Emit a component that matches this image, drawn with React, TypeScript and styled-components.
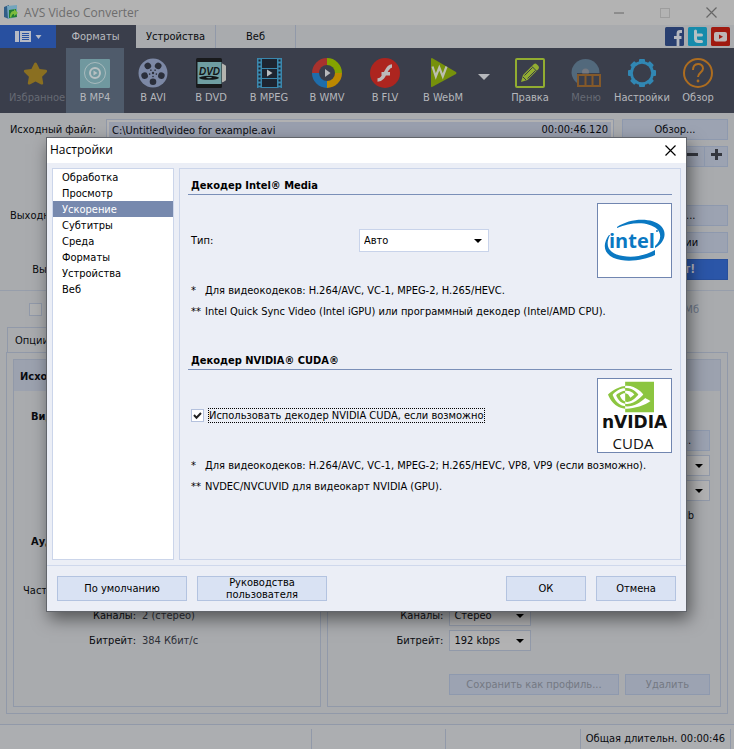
import React from "react";
import styled, { createGlobalStyle, css } from "styled-components";
import { SiNvidia } from "react-icons/si";
import { FaStar } from "react-icons/fa";

const ui = `"DejaVu Sans Condensed", "Noto Sans", sans-serif`;
const titleFont = `"Open Sans", "Noto Sans", sans-serif`;

const c = {
  page: "#a9abae",
  title: "#b3b3b3",
  bar: "#3a3e4b",
  line: "#9199a9",
  button: "#9ca3b2",
  field: "#b2b2b3",
  text: "#0a0b10",
};

const Global = createGlobalStyle`
  * { box-sizing: border-box; }
  html, body { margin: 0; padding: 0; }
  body { background: ${c.page}; font: 11px/15px ${ui}; color: ${c.text}; }
  button, input, select { font: inherit; color: inherit; margin: 0; }
  button { padding: 0; border: 0; background: none; white-space: nowrap; }
  h2, h3, p, ul { margin: 0; padding: 0; font: inherit; }
`;

/* ---------- main window ---------- */

const Window = styled.div`
  position: relative;
  display: flex;
  flex-direction: column;
  min-height: 100vh;
  overflow: hidden;
`;

const TitleBar = styled.header`
  display: flex;
  align-items: center;
  gap: 5px;
  height: 25px;
  padding-left: 4px;
  background: ${c.title};
  color: #6d6d6d;
  font: 12px/24px ${titleFont};
`;

const WindowButtons = styled.div`
  display: flex;
  margin-left: auto;
`;

const WindowButton = styled.button`
  display: grid;
  place-items: center;
  width: 46px;
  height: 24px;
`;

const TabBar = styled.nav`
  display: flex;
  height: 23px;
`;

const AppMenu = styled.button`
  display: grid;
  place-items: center;
  width: 56px;
  background: #2850a0;
`;

const MainTab = styled.button<{ $active?: boolean }>`
  width: 80px;
  border-right: 1px solid ${c.line};
  ${(p) =>
    p.$active &&
    css`
      background: ${c.bar};
      border-color: ${c.bar};
      color: #b8babf;
    `}
`;

const Social = styled.div`
  display: flex;
  align-items: center;
  gap: 4px;
  margin-left: auto;
  padding-right: 4px;

  a {
    display: block;
    height: 19px;
  }
`;

const Toolbar = styled.div`
  display: flex;
  justify-content: space-between;
  height: 65px;
  padding: 0 8px;
  background: ${c.bar};
`;

const ToolGroup = styled.div`
  display: flex;
`;

const Tool = styled.button<{ $active?: boolean; $disabled?: boolean; $narrow?: boolean }>`
  display: flex;
  flex-direction: column;
  align-items: center;
  gap: 2px;
  width: ${(p) => (p.$narrow ? 56 : 58)}px;
  padding-top: 10px;
  background: ${(p) => (p.$active ? "#4f5b6b" : "transparent")};
  color: ${(p) => (p.$disabled ? "#666a74" : "#b5b7bc")};
`;

const MoreButton = styled.button`
  display: grid;
  place-items: center;
  width: 24px;
  padding-bottom: 8px;
`;

const Files = styled.section`
  display: grid;
  grid-template-columns: 88px 1fr 106px;
  column-gap: 8px;
  padding: 6px 6px 4px 8px;
  border-bottom: 1px solid #979eab;
`;

const FileLabel = styled.label`
  text-align: right;
  line-height: 22px;
  white-space: nowrap;
  grid-column: 1;
`;

const FileField = styled.div`
  display: flex;
  height: 22px;
  margin-left: 2px;
  padding: 2px;
  border: 1px solid ${c.line};
  background: ${c.field};
`;

const FileInput = styled.input`
  flex: 1;
  min-width: 0;
  padding: 0 3px;
  border: 0;
  background: #999fae;
  outline: none;
`;

const FileTime = styled.span`
  padding-right: 3px;
  background: #999fae;
  line-height: 16px;
`;

const FlatButton = styled.button<{ $primary?: boolean; $w?: number; $dim?: boolean }>`
  width: ${(p) => (p.$w ? `${p.$w}px` : "auto")};
  height: 21px;
  border: 1px solid #8e99ae;
  background: ${c.button};
  color: ${(p) => (p.$dim ? "#747983" : "inherit")};
  ${(p) =>
    p.$primary &&
    css`
      border-color: #284f9b;
      background: #2b56a8;
      color: #b9bcc4;
      font-size: 12px;
      font-weight: 700;
    `}
`;

const SplitButtons = styled.div`
  grid-column: 3;
  display: flex;
  justify-content: flex-end;
  margin: 5px 0 38px;

  button + button {
    margin-left: -1px;
  }
`;

const ActionRow = styled.div`
  display: contents;

  > button {
    margin-bottom: 6px;
    grid-column: 3;
  }
`;

const SizeRow = styled.div`
  display: flex;
  align-items: center;
  justify-content: space-between;
  height: 36px;
  padding: 0 35px 0 29px;
  color: #6c7789;
`;

const Tick = styled.input<{ $dim?: boolean }>`
  appearance: none;
  flex: none;
  width: 13px;
  height: 13px;
  border: 1px solid ${(p) => (p.$dim ? c.line : "#b4c1dd")};
  background: ${(p) => (p.$dim ? "#b0b1b2" : "#fff")};
  outline: none;

  &:checked {
    background: #fff
      url("data:image/svg+xml,%3Csvg xmlns='http://www.w3.org/2000/svg' viewBox='0 0 11 11'%3E%3Cpath d='M2 5l2.5 2.8L9 3' fill='none' stroke='%23222' stroke-width='2'/%3E%3C/svg%3E");
  }
`;

const OptionsTab = styled.button`
  align-self: flex-start;
  width: 86px;
  height: 25px;
  margin-left: 7px;
  padding-left: 7px;
  border: 1px solid ${c.line};
  border-bottom: 0;
  text-align: left;
`;

const Options = styled.section`
  flex: 1;
  display: grid;
  grid-template-columns: 308fr 393fr;
  gap: 6px;
  margin: 0 6px 10px;
  padding: 6px;
  border: 1px solid ${c.line};
`;

const Group = styled.div`
  border: 1px solid ${c.line};
`;

const GroupTitle = styled.h2`
  height: 31px;
  padding-left: 6px;
  background: #9ca2af;
  font-weight: 700;
  line-height: 33px;
`;

const GroupRows = styled.div`
  padding: 12px 10px 0 9px;
`;

const GroupRow = styled.div<{ $label: number }>`
  display: grid;
  grid-template-columns: ${(p) => p.$label}px auto 1fr;
  align-items: center;
  column-gap: 6px;
  height: 25px;
  white-space: nowrap;

  > label,
  > span:first-child {
    justify-self: end;
  }
`;

const GroupHeading = styled.h3`
  height: 25px;
  padding-left: 8px;
  font-weight: 700;
  line-height: 27px;
`;

const Muted = styled.span`
  color: #2e3038;
`;

const RightEnd = styled.div`
  grid-column: 3;
  justify-self: end;
  min-width: 81px;
`;

const Amount = styled.span`
  grid-column: 3;
  justify-self: end;
  padding-right: 16px;
`;

const SelectBox = styled.span<{ $w: number; $light?: boolean }>`
  display: flex;
  align-items: center;
  width: ${(p) => p.$w}px;
  height: ${(p) => (p.$light ? 23 : 21)}px;
  border: 1px solid ${(p) => (p.$light ? "#c8d3ea" : c.line)};
  background: ${(p) => (p.$light ? "#fff" : c.field)};

  select {
    appearance: none;
    flex: 1;
    min-width: 0;
    padding: 0 4px;
    border: 0;
    background: none;
    outline: none;
  }
  svg {
    flex: none;
    margin-right: 6px;
  }
`;

const ProfileButtons = styled.div`
  display: flex;
  justify-content: flex-end;
  gap: 6px;
  padding: 21px 10px 9px;
`;

const StatusBar = styled.footer`
  display: grid;
  grid-template-columns: 312fr 134fr 135fr 150px 3px;
  height: 25px;
  padding: 4px 0 1px;
  border-top: 1px solid ${c.line};
  background: #acaeb1;
`;

const StatusCell = styled.div`
  border-right: 1px solid ${c.line};
  padding-right: 5px;
  text-align: right;
  line-height: 20px;
  white-space: nowrap;
`;

/* ---------- settings dialog ---------- */

const Overlay = styled.div`
  position: absolute;
  inset: 137px 0 auto;
  display: flex;
  justify-content: center;
  padding-right: 1px;
`;

const Dialog = styled.div`
  width: 641px;
  max-width: 100%;
  border: 1px solid #62656b;
  background: #ebeef6;
  color: #000;
  box-shadow: 3px 7px 16px rgba(0, 0, 0, 0.5);
`;

const DialogTitle = styled.div`
  display: flex;
  justify-content: space-between;
  height: 25px;
  padding-left: 3px;
  background: #fff;
  font: 12px/24px ${titleFont};

  button {
    display: grid;
    place-items: center;
    width: 31px;
  }
`;

const DialogBody = styled.div`
  display: grid;
  grid-template-columns: 122px 1fr;
  gap: 5px;
  padding: 5px;
  border-bottom: 1px solid #cfd8ec;
`;

const Categories = styled.ul`
  list-style: none;
  border: 1px solid #cbd5ea;
  background: #fff;
`;

const Category = styled.li<{ $active?: boolean }>`
  button {
    width: 100%;
    height: 16px;
    padding: 1px 0 0 9px;
    display: block;
    text-align: left;
    line-height: 15px;
    background: ${(p) => (p.$active ? "#7789ae" : "transparent")};
    color: ${(p) => (p.$active ? "#fff" : "#000")};
  }
`;

const Page = styled.div`
  display: flex;
  flex-direction: column;
  gap: 30px;
  padding: 8px 8px 62px;
  border: 1px solid #cbd5ea;
`;

const SectionTitle = styled.h2`
  height: 18px;
  padding-left: 3px;
  border-bottom: 1px solid #7a8fb8;
  font-weight: 700;
  line-height: 18px;
`;

const SectionRow = styled.div`
  display: flex;
  align-items: center;
  margin: 8px 0 2px;
  padding-left: 3px;
`;

const TypeLabel = styled.label`
  width: 168px;
`;

const Logo = styled.div`
  display: grid;
  place-items: center;
  align-content: center;
  width: 75px;
  height: 75px;
  margin-left: auto;
  border: 1px solid #7186b0;
  background: #fff;
`;

const FocusLabel = styled.label`
  margin-left: 4px;
  border: 1px dotted #000;
  line-height: 13px;
`;

const Note = styled.p`
  display: grid;
  grid-template-columns: 14px 1fr;
  padding-left: 3px;
  line-height: 21px;
`;

const DialogFooter = styled.div`
  display: flex;
  gap: 10px;
  padding: 10px;
`;

const DialogButton = styled.button<{ $w: number; $push?: boolean }>`
  width: ${(p) => p.$w}px;
  height: 25px;
  margin-left: ${(p) => (p.$push ? "auto" : 0)};
  border: 1px solid #b3c3e0;
  background: #d9e2f3;
  line-height: 12px;
  white-space: normal;
`;

/* ---------- drawings ---------- */

const Icon = ({ children }: { children: React.ReactNode }) => (
  <svg width="30" height="30" viewBox="0 0 30 30" aria-hidden="true">
    {children}
  </svg>
);

const Arrow = ({ color = "#000", w = 8 }: { color?: string; w?: number }) => (
  <svg width={w} height={w / 2} viewBox="0 0 8 4" aria-hidden="true">
    <path d="M0 0h8L4 4z" fill={color} />
  </svg>
);

const Cross = ({ color }: { color: string }) => (
  <svg width="11" height="11" viewBox="0 0 11 11" aria-hidden="true">
    <path d="M.5.5l10 10M10.5.5l-10 10" stroke={color} strokeWidth="1.2" />
  </svg>
);

const AppLogo = () => (
  <svg width="15" height="16" viewBox="0 0 15 16" aria-hidden="true">
    <path d="M0 2l5-2v14l-5-2z" fill="#315e87" />
    <path d="M3 1l10-1v12L4 14z" fill="#73a5bd" />
    <path d="M5 5l7-1 1 8-8 1z" fill="#207b32" />
    <path d="M6 12c0-5 2-6 4-6V4l4 4-4 3V9C8 9 8 10 7 13z" fill="#7bbb3d" />
  </svg>
);

const MenuLogo = () => (
  <svg width="27" height="12" viewBox="0 0 27 12" aria-hidden="true">
    <path d="M0 0h4v11H0zM5 0h11v11H5z" fill="#b6bac5" />
    <path d="M7 2.5h7M7 4.5h7M7 6.5h7M7 8.5h7" stroke="#2850a0" />
    <path d="M20.500 4h6l-3 4z" fill="#b6bac5" />
  </svg>
);

const Star = () => (
  <Icon>
    <svg x="1" y="3" width="28" height="25">
      <FaStar size={25} color="#8a6f21" />
    </svg>
  </Icon>
);

const Mp4 = () => (
  <Icon>
    <rect y="1" width="30" height="29" rx="1" fill="#70989f" />
    <circle cx="15" cy="15" r="10.500" fill="none" stroke="#a8babd" />
    <circle cx="15" cy="15" r="5" fill="none" stroke="#b8c0c2" strokeWidth="2" />
    <path d="M13.500 12.500l4 2.500-4 2.500z" fill="#b8c0c2" />
  </Icon>
);

const Avi = () => (
  <Icon>
    <circle cx="15" cy="15" r="14.500" fill="#7c88a5" />
    {[0, 72, 144, 216, 288].map((a) => (
      <g key={a} transform={`rotate(${a + 36} 15 15)`}>
        <circle cx="15" cy="6.200" r="3.300" fill="#2b2f3b" />
        <circle cx="15" cy="11.500" r=".8" fill="#2b2f3b" />
      </g>
    ))}
    <circle cx="15" cy="15" r="1.200" fill="#2b2f3b" />
  </Icon>
);

const Dvd = () => (
  <Icon>
    <path d="M23 5a10 10 0 0 1 0 20z" fill="#b3b3ae" />
    <rect width="26" height="30" rx="1.500" fill="#181a1c" />
    <rect x="1.500" y="4" width="24" height="22" fill="#6f9ea2" />
    <text x="13.500" y="16.500" textAnchor="middle" fontFamily="Liberation Sans" fontWeight="700" fontStyle="italic" fontSize="10" fill="#131617">
      DVD
    </text>
    <ellipse cx="13" cy="19.800" rx="10" ry="2" fill="#131617" />
    <ellipse cx="13" cy="19.600" rx="3" ry=".6" fill="#6f9ea2" />
  </Icon>
);

const Mpeg = () => (
  <Icon>
    <rect x="3" width="25" height="30" fill="#3a87ad" />
    <path d="M8 1h15v9H8zM8 11h15v9H8zM8 21h15v8H8z" fill="#1d2430" />
    <path d="M5.500 1.500V30M25.500 1.500V30" stroke="#1d2430" strokeWidth="2" strokeDasharray="2 2" />
    <path d="M13 11.500l5.500 3.500-5.500 3.500z" fill="#b9bcbf" />
  </Icon>
);

const Wmv = () => (
  <Icon>
    <path d="M15 0A15 15 0 0 0 0 15h15z" fill="#a8322d" />
    <path d="M15 0a15 15 0 0 1 15 15H15z" fill="#84a300" />
    <path d="M0 15a15 15 0 0 0 15 15V15z" fill="#1f6daa" />
    <path d="M30 15a15 15 0 0 1-15 15V15z" fill="#bd8800" />
    <circle cx="15" cy="15" r="8" fill={c.bar} />
    <path d="M13 11l5.500 4-5.500 4z" fill="#b9babd" />
  </Icon>
);

const Flv = () => (
  <Icon>
    <circle cx="15" cy="15" r="15" fill="#ad251f" />
    <path d="M22 8c-7 0-6 14-14.500 14M11.500 15.800H20" fill="none" stroke="#bcb9b9" strokeWidth="3.400" />
  </Icon>
);

const Webm = () => (
  <Icon>
    <path d="M3 1q0-1 1-1l24 14q1 1 0 2L4 29q-1 .5-1-1z" fill="#76910b" />
    <path d="M4.500 8.500l3.300 10 3.500-9 3.500 9L18.500 8.500" fill="none" stroke="#bcbfb0" strokeWidth="2.200" />
  </Icon>
);

const Edit = () => (
  <Icon>
    <rect x="1" y="1" width="28" height="28" rx="1" fill="none" stroke="#92ad31" strokeWidth="2" />
    <path d="M6 24l2-7L19 6q1.500-1 3 .5l1.500 1.500q1 1.500 0 3L12.500 22z" fill="#92ad31" />
    <path d="M17 8.500l5 5M9.500 17.500l8-8M12.500 20.500l8-8M8 19l3 3" stroke={c.bar} strokeWidth="1" />
  </Icon>
);

const DiscMenu = () => (
  <Icon>
    <path d="M.5 15a14 14 0 0 1 28 0z" fill="#52697c" />
    <circle cx="14.500" cy="14" r="3.500" fill="#747880" />
    <path d="M6 15.500h24V30H6z" fill={c.bar} />
    <path d="M.5 15a14.500 14.500 0 0 0 5.500 10V15z" fill="#52697c" />
    <path d="M7 17h22v11H7zM14.500 17v11M21.500 17v11" fill="none" stroke="#84592a" strokeWidth="2" />
  </Icon>
);

const Gear = () => (
  <Icon>
    {[0, 45, 90, 135].map((a) => (
      <rect key={a} x="12" y="1" width="6" height="28" rx="1" fill="#3187b3" transform={`rotate(${a} 15 15)`} />
    ))}
    <circle cx="15" cy="15" r="12" fill="#3187b3" />
    <circle cx="15" cy="15" r="9.200" fill={c.bar} />
  </Icon>
);

const Help = () => (
  <Icon>
    <circle cx="15" cy="15" r="14" fill="none" stroke="#ad6d20" strokeWidth="2" />
    <path d="M10 12c0-8 10-7.500 10-1.500 0 4-5 4-5 8.500" fill="none" stroke="#ad6d20" strokeWidth="2" />
    <circle cx="15" cy="23" r="1.400" fill="#ad6d20" />
  </Icon>
);

const SocialIcon = ({ fill, children }: { fill: string; children: React.ReactNode }) => (
  <svg width="19" height="19" viewBox="0 0 19 19" aria-hidden="true">
    <rect width="19" height="19" rx="1.500" fill={fill} />
    {children}
  </svg>
);

const IntelMark = () => (
  <svg width="65" height="44" viewBox="0 0 65 44" role="img" aria-label="Intel">
    <path
      d="M15 8C28-1 50-2 59 7c7 7 3 17-6 22v-2c6-5 7-12 2-17C46 2 29 3 15 9zM7 16C-1 27 2 38 19 41c12 2 25-1 34-5v-5c-9 5-20 8-32 6C8 35 2 28 8 16z"
      fill="#0a78c2"
    />
    <text x="7" y="29" fontFamily="Open Sans" fontWeight="700" fontSize="20" fill="#0a78c2">
      intel
    </text>
    <circle cx="55" cy="12" r="1" fill="#0a78c2" />
  </svg>
);

const CudaMark = () => (
  <svg width="69" height="73" viewBox="0 0 69 73" role="img" aria-label="NVIDIA CUDA">
    <svg x="8" y="-5" width="46" height="46">
      <SiNvidia size={46} color="#8cc540" />
    </svg>
    <text x="2" y="49" fontFamily="DejaVu Sans" fontWeight="700" fontSize="17" fill="#111">
      nVIDIA
    </text>
    <text x="33" y="70" textAnchor="middle" fontFamily="Open Sans" fontSize="15" fill="#111">
      CUDA
    </text>
  </svg>
);

/* ---------- data ---------- */

const formats: [string, React.ReactNode, string?][] = [
  ["Избранное", <Star />, "disabled"],
  ["В MP4", <Mp4 />, "active"],
  ["В AVI", <Avi />],
  ["В DVD", <Dvd />],
  ["В MPEG", <Mpeg />],
  ["В WMV", <Wmv />],
  ["В FLV", <Flv />],
  ["В WebM", <Webm />],
];

const tools: [string, React.ReactNode, string?][] = [
  ["Правка", <Edit />],
  ["Меню", <DiscMenu />, "disabled"],
  ["Настройки", <Gear />],
  ["Обзор", <Help />],
];

const categories = ["Обработка", "Просмотр", "Ускорение", "Субтитры", "Среда", "Форматы", "Устройства", "Веб"];

type SelectProps = { id: string; value: string; w: number; light?: boolean; label?: string };

const Select = ({ id, value, w, light, label }: SelectProps) => (
  <SelectBox $w={w} $light={light}>
    <select id={id} aria-label={label} defaultValue={value}>
      <option>{value}</option>
    </select>
    <Arrow />
  </SelectBox>
);

const MainWindow = () => (
  <>
    <TitleBar>
      <AppLogo />
      <span>AVS Video Converter</span>
      <WindowButtons>
        <WindowButton aria-label="Свернуть">
          <svg width="10" height="2"><path d="M0 1h10" stroke="#666" /></svg>
        </WindowButton>
        <WindowButton aria-label="Развернуть">
          <svg width="10" height="10"><rect x=".5" y=".5" width="9" height="9" fill="none" stroke="#9d9d9d" /></svg>
        </WindowButton>
        <WindowButton aria-label="Закрыть"><Cross color="#666" /></WindowButton>
      </WindowButtons>
    </TitleBar>

    <TabBar>
      <AppMenu aria-label="Меню программы"><MenuLogo /></AppMenu>
      <MainTab $active>Форматы</MainTab>
      <MainTab>Устройства</MainTab>
      <MainTab>Веб</MainTab>
      <Social>
        <a href="#facebook" aria-label="Facebook">
          <SocialIcon fill="#293f70">
            <path d="M17 4.500h-2q-2 0-2 2V19M9 10.500h7.500" fill="none" stroke="#b5b8bf" strokeWidth="2.800" />
          </SocialIcon>
        </a>
        <a href="#twitter" aria-label="Twitter">
          <SocialIcon fill="#168bab">
            <path d="M7.500 4v7.500q0 3 3 3h3M7.500 8h6" fill="none" stroke="#b5c0c3" strokeWidth="3" strokeLinecap="round" />
          </SocialIcon>
        </a>
        <a href="#youtube" aria-label="YouTube">
          <SocialIcon fill="#a01a10">
            <rect x="3" y="5" width="13" height="9.500" rx="2" fill="#bdb7b7" />
            <path d="M8 7.500l4 2.200L8 12z" fill="#a01a10" />
          </SocialIcon>
        </a>
      </Social>
    </TabBar>

    <Toolbar>
      <ToolGroup>
        {formats.map(([name, icon, state]) => (
          <Tool key={name} $active={state === "active"} $disabled={state === "disabled"}>
            {icon}
            {name}
          </Tool>
        ))}
        <MoreButton aria-label="Другие форматы"><Arrow color="#b6b8bc" w={12} /></MoreButton>
      </ToolGroup>
      <ToolGroup>
        {tools.map(([name, icon, state]) => (
          <Tool key={name} $narrow $disabled={state === "disabled"}>
            {icon}
            {name}
          </Tool>
        ))}
      </ToolGroup>
    </Toolbar>

    <Files>
      <FileLabel htmlFor="source">Исходный файл:</FileLabel>
      <FileField>
        <FileInput id="source" defaultValue="C:\Untitled\video for example.avi" />
        <FileTime>00:00:46.120</FileTime>
      </FileField>
      <FlatButton>Обзор...</FlatButton>
      <SplitButtons>
        <FlatButton $w={25} aria-label="Убрать">
          <svg width="11" height="11"><path d="M0 5.500h11" stroke="#34373f" strokeWidth="3" /></svg>
        </FlatButton>
        <FlatButton $w={24} aria-label="Добавить">
          <svg width="11" height="11"><path d="M0 5.500h11M5.500 0v11" stroke="#34373f" strokeWidth="3" /></svg>
        </FlatButton>
      </SplitButtons>
      <FileLabel as="span">Выходной файл:</FileLabel>
      <ActionRow><FlatButton>Обзор...</FlatButton></ActionRow>
      <ActionRow><FlatButton>Функции</FlatButton></ActionRow>
      <FileLabel as="span">Выводить в:</FileLabel>
      <ActionRow><FlatButton $primary>Старт!</FlatButton></ActionRow>
    </Files>

    <SizeRow>
      <Tick type="checkbox" $dim aria-label="Разделить" />
      <span>Мб</span>
    </SizeRow>

    <OptionsTab>Опции</OptionsTab>
    <Options>
      <Group>
        <GroupTitle>Исходный файл</GroupTitle>
        <GroupRows>
          <GroupHeading>Видео</GroupHeading>
          <GroupRow $label={113} />
          <GroupRow $label={113} />
          <GroupRow $label={113} />
          <GroupRow $label={113} />
          <GroupHeading>Аудио</GroupHeading>
          <GroupRow $label={113} />
          <GroupRow $label={113}><span>Частота дискретиз-и:</span></GroupRow>
          <GroupRow $label={113}><span>Каналы:</span><Muted>2 (стерео)</Muted></GroupRow>
          <GroupRow $label={113}><span>Битрейт:</span><Muted>384 Кбит/с</Muted></GroupRow>
        </GroupRows>
      </Group>
      <Group>
        <GroupTitle />
        <GroupRows>
          <GroupRow $label={106} />
          <GroupRow $label={106}><RightEnd><FlatButton $w={81}>Опции...</FlatButton></RightEnd></GroupRow>
          <GroupRow $label={106}><RightEnd><Select id="frame" value="" w={81} label="Размер кадра" /></RightEnd></GroupRow>
          <GroupRow $label={106}><RightEnd><Select id="rate" value="" w={81} label="Частота кадров" /></RightEnd></GroupRow>
          <GroupRow $label={106}><Amount>Mb</Amount></GroupRow>
          <GroupRow $label={106} />
          <GroupRow $label={106} />
          <GroupRow $label={106} />
          <GroupRow $label={106}>
            <label htmlFor="channels">Каналы:</label>
            <Select id="channels" value="Стерео" w={82} />
          </GroupRow>
          <GroupRow $label={106}>
            <label htmlFor="bitrate">Битрейт:</label>
            <Select id="bitrate" value="192 kbps" w={82} />
          </GroupRow>
        </GroupRows>
        <ProfileButtons>
          <FlatButton $w={170} $dim>Сохранить как профиль...</FlatButton>
          <FlatButton $w={85} $dim>Удалить</FlatButton>
        </ProfileButtons>
      </Group>
    </Options>

    <StatusBar>
      <StatusCell />
      <StatusCell />
      <StatusCell />
      <StatusCell>Общая длительн. 00:00:46</StatusCell>
    </StatusBar>
  </>
);

const SettingsDialog = () => (
  <Overlay>
    <Dialog role="dialog" aria-labelledby="settings-title">
      <DialogTitle>
        <span id="settings-title">Настройки</span>
        <button aria-label="Закрыть настройки"><Cross color="#000" /></button>
      </DialogTitle>
      <DialogBody>
        <Categories>
          {categories.map((name) => (
            <Category key={name} $active={name === "Ускорение"}>
              <button>{name}</button>
            </Category>
          ))}
        </Categories>
        <Page>
          <section>
            <SectionTitle>Декодер Intel® Media</SectionTitle>
            <SectionRow>
              <TypeLabel htmlFor="decoder">Тип:</TypeLabel>
              <Select id="decoder" value="Авто" w={130} light />
              <Logo><IntelMark /></Logo>
            </SectionRow>
            <Note><span>*</span><span>Для видеокодеков: H.264/AVC, VC-1, MPEG-2, H.265/HEVC.</span></Note>
            <Note><span>**</span><span>Intel Quick Sync Video (Intel iGPU) или программный декодер (Intel/AMD CPU).</span></Note>
          </section>
          <section>
            <SectionTitle>Декодер NVIDIA® CUDA®</SectionTitle>
            <SectionRow>
              <Tick type="checkbox" id="cuda" defaultChecked />
              <FocusLabel htmlFor="cuda">Использовать декодер NVIDIA CUDA, если возможно</FocusLabel>
              <Logo><CudaMark /></Logo>
            </SectionRow>
            <Note><span>*</span><span>Для видеокодеков: H.264/AVC, VC-1, MPEG-2; H.265/HEVC, VP8, VP9 (если возможно).</span></Note>
            <Note><span>**</span><span>NVDEC/NVCUVID для видеокарт NVIDIA (GPU).</span></Note>
          </section>
        </Page>
      </DialogBody>
      <DialogFooter>
        <DialogButton $w={130}>По умолчанию</DialogButton>
        <DialogButton $w={130}>Руководства пользователя</DialogButton>
        <DialogButton $w={80} $push>ОК</DialogButton>
        <DialogButton $w={80}>Отмена</DialogButton>
      </DialogFooter>
    </Dialog>
  </Overlay>
);

export default function App() {
  return (
    <Window>
      <Global />
      <MainWindow />
      <SettingsDialog />
    </Window>
  );
}
